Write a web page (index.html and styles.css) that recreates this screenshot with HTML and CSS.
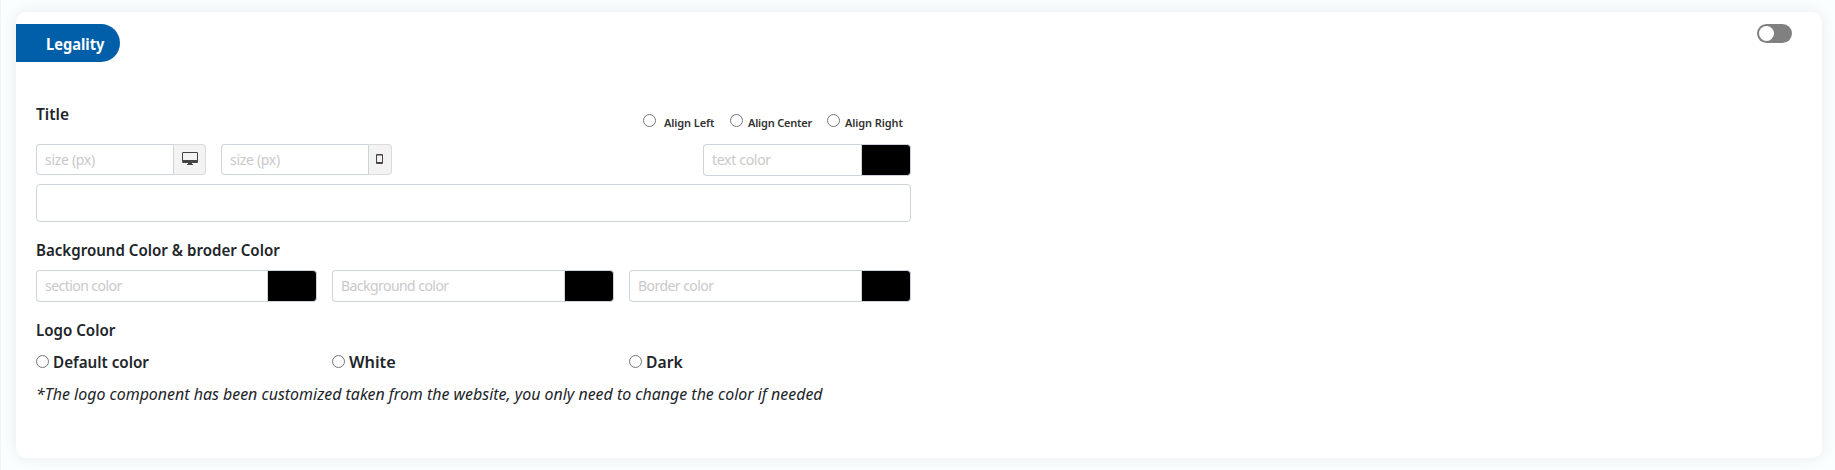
FILE: index.html
```
<!DOCTYPE html>
<html lang="en">
<head>
<meta charset="utf-8">
<title>Legality</title>
<link rel="stylesheet" href="styles.css">
</head>
<body>
<main class="card">
  <header class="card-head">
    <h2 class="badge"><span class="t t-badge">Legality</span></h2>
    <span class="toggle"><span class="knob"></span></span>
  </header>
  <form class="form">
    <div class="title-row">
      <span class="t t-title">Title</span>
      <div class="aligns">
        <label class="align left"><input type="radio" name="align"><span class="t">Align Left</span></label>
        <label class="align center"><input type="radio" name="align"><span class="t">Align Center</span></label>
        <label class="align right"><input type="radio" name="align"><span class="t">Align Right</span></label>
      </div>
    </div>
    <div class="size-row">
      <div class="group desktop"><input class="field" type="text" placeholder="size (px)"><span class="addon"><svg width="16" height="14" viewBox="0 0 16 14"><path fill="#444" fill-rule="evenodd" d="M1.200 0H14.800Q16 0 16 1.200V9.800Q16 11 14.800 11H10V12H11V13H5V12H6V11H1.200Q0 11 0 9.800V1.200Q0 0 1.200 0ZM1 1V8H15V1Z"/></svg></span></div>
      <div class="group mobile"><input class="field" type="text" placeholder="size (px)"><span class="addon"><svg width="7" height="10" viewBox="0 0 7 10"><path fill="#444" fill-rule="evenodd" d="M1 0H6Q7 0 7 1V9Q7 10 6 10H1Q0 10 0 9V1Q0 0 1 0ZM1 1.500V8H6V1.500Z"/></svg></span></div>
      <div class="group color text-color"><input class="field" type="text" placeholder="text color"><span class="swatch"></span></div>
    </div>
    <input class="wide" type="text">
    <div class="label bg-label"><span class="t t-bg">Background Color &amp; broder Color</span></div>
    <div class="columns">
      <div class="group color"><input class="field" type="text" placeholder="section color"><span class="swatch"></span></div>
      <div class="group color"><input class="field" type="text" placeholder="Background color"><span class="swatch"></span></div>
      <div class="group color"><input class="field" type="text" placeholder="Border color"><span class="swatch"></span></div>
    </div>
    <div class="label logo-label"><span class="t t-logo">Logo Color</span></div>
    <div class="columns options">
      <label class="option"><input type="radio" name="logo"><span class="t t-def">Default color</span></label>
      <label class="option"><input type="radio" name="logo"><span class="t t-white">White</span></label>
      <label class="option"><input type="radio" name="logo"><span class="t t-dark">Dark</span></label>
    </div>
    <p class="note"><em class="t">*The logo component has been customized taken from the website, you only need to change the color if needed</em></p>
  </form>
</main>
</body>
</html>
```
FILE: styles.css
```
* { box-sizing: border-box; }
body {
  margin: 0;
  height: 470px;
  padding: 12px 13px 12px 15px;
  overflow: hidden;
  background: #fafeff;
  border-left: 1px solid #f1f4f5;
  font-family: "Noto Sans", "Open Sans", sans-serif;
  font-size: 16px;
  color: #212529;
}
.card {
  height: 446px;
  background: #fff;
  border-radius: 10px;
  box-shadow: 0 0 16px rgba(0, 0, 0, .08);
}
.card-head {
  display: flex;
  justify-content: space-between;
  padding: 12px 30px 0 0;
}
.badge {
  margin: 0;
  width: 104px;
  height: 38px;
  padding-left: 30px;
  border-radius: 0 19px 19px 0;
  background: #005fa8;
  color: #fff;
  font-size: 16px;
  line-height: 40px;
}
.t { display: inline-block; white-space: nowrap; font-weight: 600; transform-origin: 0 50%; }
.t-badge { font-weight: 700; transform: scaleX(.915); }
.t-title { transform: scaleX(.97); }
.t-bg { transform: scaleX(.943); }
.t-logo { transform: scaleX(.943); }
.t-def { transform: scaleX(.95); }
.t-white { transform: scaleX(1.02); }
.t-dark { transform: scaleX(.98); }
.toggle {
  width: 35px;
  height: 19px;
  padding: 2px;
  border-radius: 10px;
  background: #808080;
}
.knob { display: block; width: 15px; height: 15px; border-radius: 50%; background: #fff; }
.form { width: 875px; margin-left: 20px; }
.title-row {
  display: flex;
  justify-content: space-between;
  height: 82px;
  padding-top: 40px;
  line-height: 24px;
}
.aligns { display: flex; padding-top: 7px; }
.align { display: flex; gap: 5px; font-size: 11px; color: #333; }
.align .t { height: 28px; line-height: 28px; }
.left { width: 87px; gap: 8px; letter-spacing: -.1px; }
.center { width: 97px; letter-spacing: -.2px; }
.right { width: 84px; letter-spacing: -.1px; }
input[type="radio"] { width: 13px; height: 13px; margin: 5px 0 0; flex: none; }
.size-row { display: flex; height: 32px; }
.group { display: flex; height: 31px; }
.desktop { width: 170px; }
.mobile { width: 171px; margin-left: 15px; }
.color { height: 32px; }
.text-color { width: 208px; margin-left: auto; }
.field {
  flex: 1;
  min-width: 0;
  height: 100%;
  padding: 0 8px;
  border: 1px solid #ced4da;
  border-right: 0;
  border-radius: 4px 0 0 4px;
  background: #fff;
  font: inherit;
  font-size: 14px;
  letter-spacing: -.55px;
}
.size-row .field { letter-spacing: -.3px; }
.color .field { padding-bottom: 1px; }
.field::placeholder { color: #c9c9c9; opacity: 1; }
.addon {
  display: flex;
  align-items: center;
  justify-content: center;
  width: 33px;
  border: 1px solid #d9dcdf;
  border-left-color: #ced4da;
  border-radius: 0 4px 4px 0;
  background: #f3f3f3;
}
.desktop .addon { padding-bottom: 2px; }
.mobile .addon { width: 24px; padding: 0 1px 1px 0; }
.swatch {
  width: 50px;
  border: 1px solid #ced4da;
  border-radius: 0 4px 4px 0;
  background: #000;
}
.wide {
  display: block;
  width: 100%;
  height: 38px;
  margin-top: 8px;
  border: 1px solid #ced4da;
  border-radius: 4px;
}
.label { line-height: 24px; height: 24px; }
.bg-label { margin: 16px 0 8px; }
.columns { display: grid; grid-template-columns: 281px 282px 282px; column-gap: 15px; }
.logo-label { margin-top: 16px; }
.options { margin-top: 8px; height: 24px; }
.option { display: flex; gap: 4px; line-height: 24px; }
.note { margin: 8px 0 0; line-height: 24px; }
.note .t { font-weight: 400; transform: scaleX(.996); }
```
